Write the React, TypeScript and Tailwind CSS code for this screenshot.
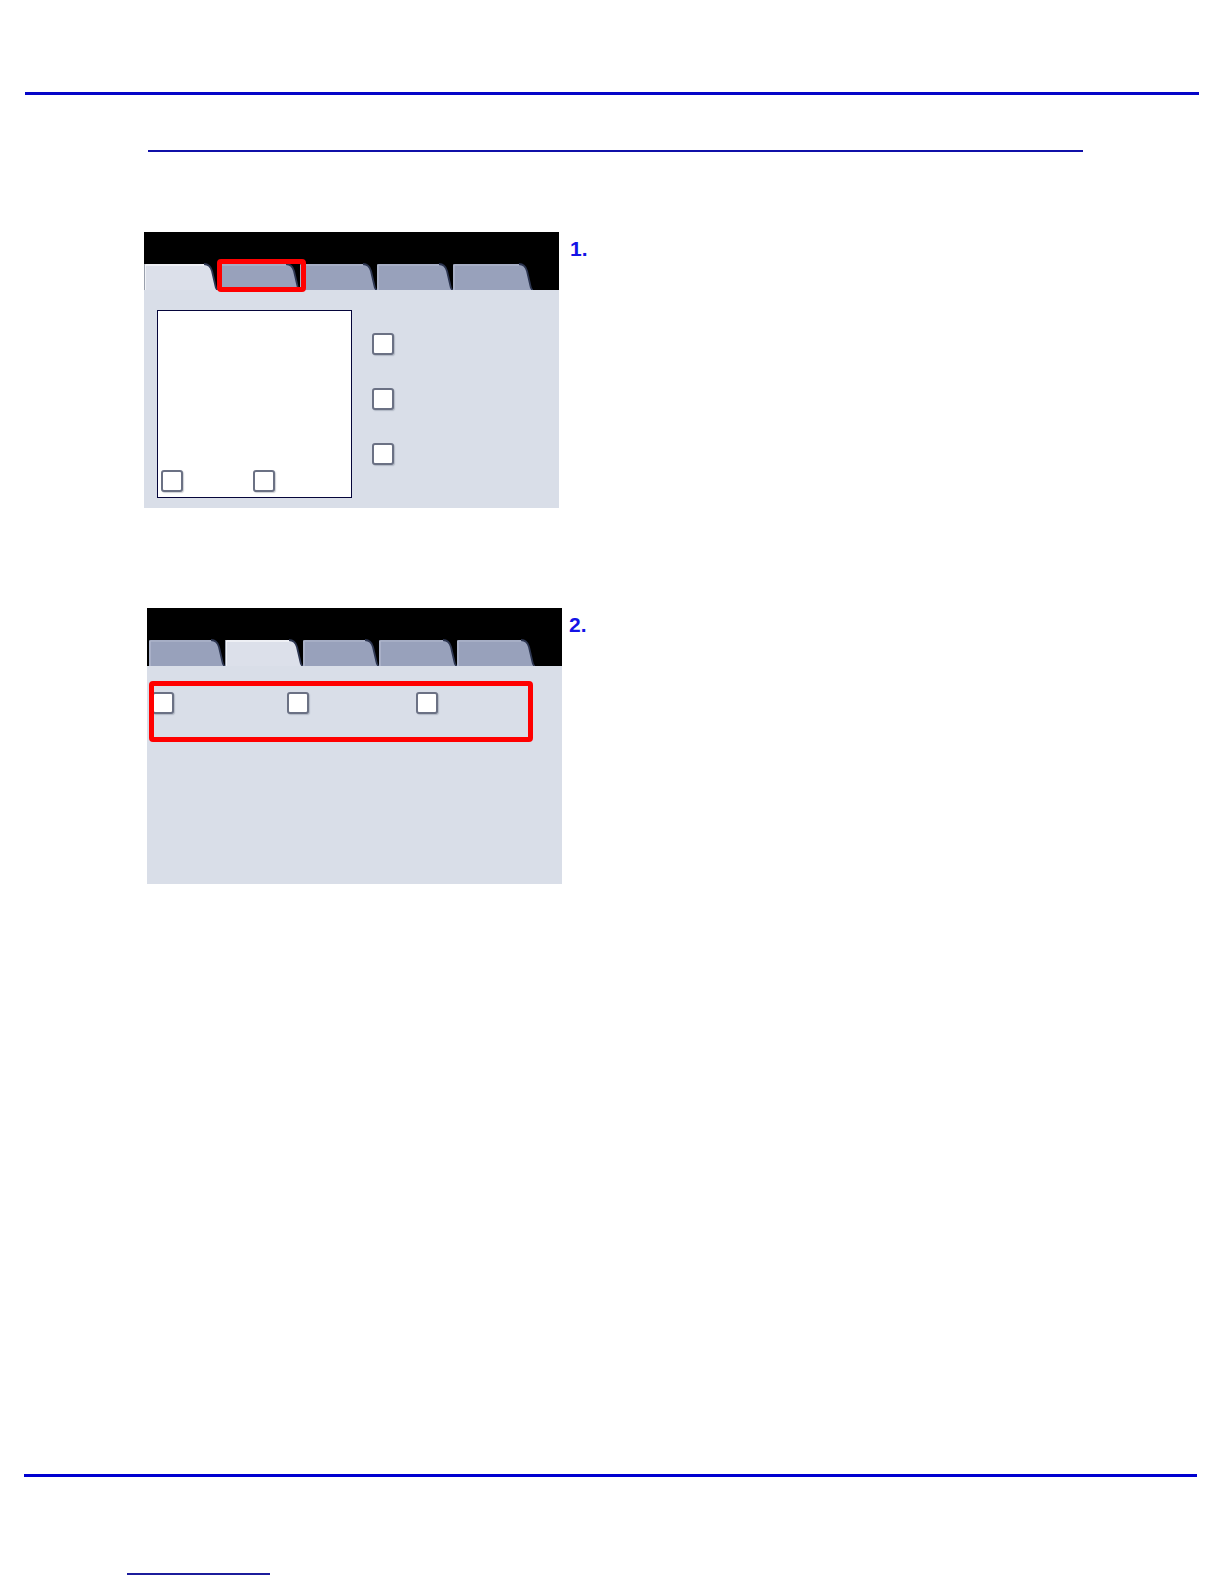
const FONT = { fontFamily: '"Liberation Sans", Arial, sans-serif' };

function Tab({ w, active }: { w: number; active?: boolean }) {
  const h = 27;
  const body = `M0 ${h} L0 2 Q0 1 2 1 L${w - 14} 1 Q${w - 8} 1 ${w - 6} 8 L${w - 3} 21 Q${w - 2} ${h} ${w} ${h} Z`;
  const edge = `M${w - 14} 1 Q${w - 8} 1 ${w - 6} 8 L${w - 3} 21 Q${w - 2} ${h} ${w} ${h}`;
  return (
    <svg width={w} height={h} className="block shrink-0">
      <path d={body} fill={active ? "#dce0ea" : "#98a1bb"} />
      <path d={`M1 ${h} L1 2 L${w - 14} 2`} fill="none" stroke={active ? "#ffffff" : "#b4bbd0"} strokeWidth="1.2" />
      {active && <path d={`M0.5 ${h} L0.5 2`} fill="none" stroke="#9aa0ad" strokeWidth="1" />}
      <path d={edge} fill="none" stroke="#2c3550" strokeWidth="1.8" />
    </svg>
  );
}

function Check() {
  return (
    <div className="h-[22px] w-[22px] shrink-0 rounded-[3px] border-2 border-[#6b7184] bg-white shadow-[1px_1px_1px_rgba(60,70,90,0.25)]" />
  );
}

function Panel({
  widths,
  start,
  active,
  redTab,
  children,
}: {
  widths: number[];
  start: number;
  active: number;
  redTab?: boolean;
  children: React.ReactNode;
}) {
  return (
    <div className="relative w-[415px] shrink-0">
      <div className="h-[31px] bg-black" />
      <div className="flex h-[27px] bg-black" style={{ paddingLeft: start }}>
        {widths.map((w, i) => (
          <Tab key={i} w={w} active={i === active} />
        ))}
      </div>
      <div className="relative h-[218px] bg-[#d9dee8]">{children}</div>
      {redTab && (
        <div className="absolute left-[73px] top-[27px] h-[33px] w-[89px] rounded-[4px] border-[5px] border-[#ff0000]" />
      )}
    </div>
  );
}

export default function App() {
  return (
    <div className="h-[1584px] w-[1224px] overflow-hidden bg-white" style={FONT}>
      <div className="h-[92px]" />
      <div className="ml-[25px] h-[2.5px] w-[1174px] bg-[#0505c8]" />
      <div className="ml-[148px] mt-[55px] h-[2.5px] w-[935px] bg-[#1010a8]" />

      <div className="ml-[144px] mt-[80px] flex items-start">
        <Panel widths={[74, 82, 77, 76, 80]} start={0} active={0} redTab>
          <div className="flex pl-[13px] pt-[20px]">
            <div className="flex h-[188px] w-[195px] items-end gap-[70px] border-[1.5px] border-[#05053a] bg-white pb-[5px] pl-[3px]">
              <Check />
              <Check />
            </div>
            <div className="ml-[20px] mt-[23px] flex flex-col gap-[33px]">
              <Check />
              <Check />
              <Check />
            </div>
          </div>
        </Panel>
        <span className="ml-[11px] mt-[6px] text-[21px] font-bold leading-none text-[#1414e6]">1.</span>
      </div>

      <div className="ml-[147px] mt-[100px] flex items-start">
        <Panel widths={[76, 78, 76, 78, 78]} start={2} active={1}>
          <div className="flex pl-[5px] pt-[26px]">
            <Check />
            <div className="ml-[113px]">
              <Check />
            </div>
            <div className="ml-[107px]">
              <Check />
            </div>
          </div>
          <div className="absolute left-[2px] top-[15px] h-[61px] w-[384px] rounded-[4px] border-[5px] border-[#ff0000]" />
        </Panel>
        <span className="ml-[7px] mt-[6px] text-[21px] font-bold leading-none text-[#1414e6]">2.</span>
      </div>

      <div className="ml-[24px] mt-[590px] h-[3px] w-[1173px] bg-[#0000d0]" />
      <div className="ml-[127px] mt-[96px] h-[2px] w-[143px] bg-[#1c1c9c]" />
    </div>
  );
}
